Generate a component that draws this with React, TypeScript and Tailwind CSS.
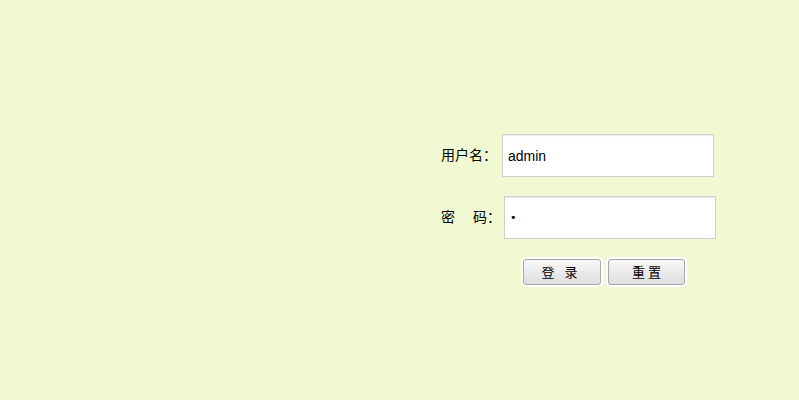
export default function App() {
  return (
    <div className="h-[400px] w-full bg-[#f0f9d1] font-['Noto_Sans_CJK_SC',sans-serif] text-[14px] text-black">
      <form className="flex flex-col pl-[441px] pt-[134px]">
        <div className="flex h-[43px] items-center">
          <label className="w-[61px] whitespace-nowrap pb-[3px]">用户名：</label>
          <input
            type="text"
            defaultValue="admin"
            className="h-[43px] w-[212px] border border-[#cfcfcf] bg-white px-[5px] font-['Liberation_Sans',sans-serif] text-[14px] text-black shadow-[inset_0_1px_1px_rgba(0,0,0,0.08)] outline-none"
          />
        </div>
        <div className="mt-[19px] flex h-[43px] items-center">
          <label className="flex w-[63px] whitespace-nowrap pb-[3px]">
            <span>密</span>
            <span className="ml-[18px]">码：</span>
          </label>
          <input
            type="password"
            defaultValue="a"
            className="h-[43px] w-[212px] border border-[#cfcfcf] bg-white px-[5px] font-['DejaVu_Sans',sans-serif] text-[11px] text-black shadow-[inset_0_1px_1px_rgba(0,0,0,0.08)] outline-none"
          />
        </div>
        <div className="mt-[20px] flex gap-[7px] pl-[82px]">
          <button
            type="button"
            className="flex h-[26px] w-[78px] items-center justify-center gap-[10px] rounded-[3px] border border-[#a6a6a6] bg-gradient-to-b from-[#f8f8f8] to-[#dedede] pr-[5px] text-[13px] text-black ring-2 ring-white"
          >
            <span>登</span>
            <span>录</span>
          </button>
          <button
            type="button"
            className="h-[26px] w-[77px] rounded-[3px] border border-[#a6a6a6] bg-gradient-to-b from-[#f8f8f8] to-[#dedede] pl-[3px] text-[13px] tracking-[3px] text-black ring-2 ring-white"
          >
            重置
          </button>
        </div>
      </form>
    </div>
  );
}
